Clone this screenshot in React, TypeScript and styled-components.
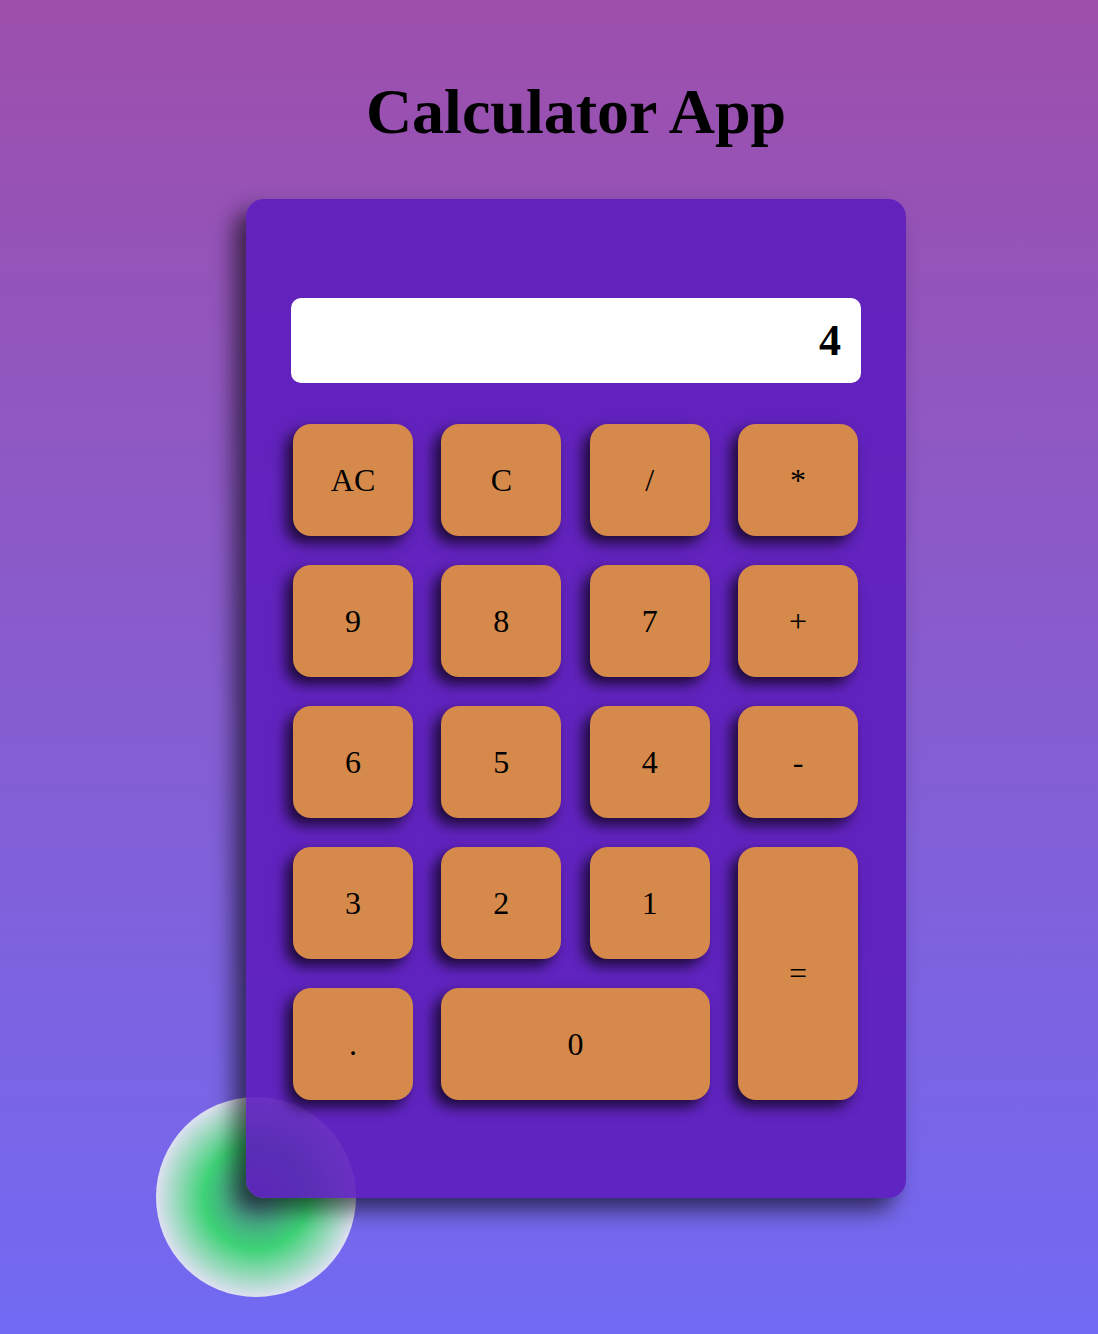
import React from "react";
import styled, { createGlobalStyle } from "styled-components";

const GlobalStyle = createGlobalStyle`
  html, body {
    margin: 0;
    padding: 0;
  }
  body {
    font-family: "Liberation Serif", "Times New Roman", serif;
  }
`;

const Page = styled.div`
  min-height: 100vh;
  box-sizing: border-box;
  padding: 75px 0 0 54px;
  background: linear-gradient(to bottom, #9d4fab 0%, #716af3 100%);
  display: flex;
  flex-direction: column;
  align-items: center;
`;

const Title = styled.h1`
  margin: 0;
  font-family: "Liberation Serif", "Times New Roman", serif;
  font-weight: 700;
  font-size: 64px;
  line-height: 74px;
  color: #000;
`;

const Stage = styled.div`
  position: relative;
  margin-top: 50px;
`;

const Orb = styled.div`
  position: absolute;
  left: -90px;
  top: 898px;
  width: 200px;
  height: 200px;
  border-radius: 50%;
  background: radial-gradient(
    circle closest-side,
    rgba(70, 140, 120, 0.75) 0%,
    #3dd276 52%,
    rgba(228, 230, 242, 0.95) 100%
  );
`;

const Calculator = styled.div`
  position: relative;
  z-index: 1;
  width: 660px;
  box-sizing: border-box;
  padding: 99px 45px 98px;
  border-radius: 18px;
  background: rgba(93, 29, 189, 0.9);
  box-shadow: -12px 12px 22px rgba(0, 0, 0, 0.6);
  display: flex;
  flex-direction: column;
  gap: 41px;
`;

const Display = styled.div`
  height: 85px;
  box-sizing: border-box;
  padding: 0 20px;
  border-radius: 10px;
  background: #ffffff;
  display: flex;
  align-items: center;
  justify-content: flex-end;
  font-family: "Liberation Serif", "Times New Roman", serif;
  font-weight: 700;
  font-size: 44px;
  color: #000;
`;

const Keys = styled.div`
  display: grid;
  grid-template-columns: repeat(4, 1fr);
  grid-auto-rows: 112px;
  column-gap: 28.33px;
  row-gap: 29px;
  padding: 0 3px 0 2px;
`;

const Key = styled.button<{ $wide?: boolean; $tall?: boolean }>`
  border: none;
  margin: 0;
  padding: 0;
  border-radius: 18px;
  background: #d5894a;
  color: #000;
  font-family: "Liberation Serif", "Times New Roman", serif;
  font-size: 32px;
  box-shadow: -7px 7px 14px rgba(0, 0, 0, 0.72);
  display: flex;
  align-items: center;
  justify-content: center;
  cursor: pointer;
  grid-column: ${(p) => (p.$wide ? "span 2" : "auto")};
  grid-row: ${(p) => (p.$tall ? "span 2" : "auto")};
`;

type KeyDef = { label: string; wide?: boolean; tall?: boolean };

const keys: KeyDef[] = [
  { label: "AC" },
  { label: "C" },
  { label: "/" },
  { label: "*" },
  { label: "9" },
  { label: "8" },
  { label: "7" },
  { label: "+" },
  { label: "6" },
  { label: "5" },
  { label: "4" },
  { label: "-" },
  { label: "3" },
  { label: "2" },
  { label: "1" },
  { label: "=", tall: true },
  { label: "." },
  { label: "0", wide: true },
];

export default function App() {
  return (
    <>
      <GlobalStyle />
      <Page>
        <Title>Calculator App</Title>
        <Stage>
          <Orb />
          <Calculator>
            <Display>4</Display>
            <Keys>
              {keys.map((k) => (
                <Key key={k.label} $wide={k.wide} $tall={k.tall}>
                  {k.label}
                </Key>
              ))}
            </Keys>
          </Calculator>
        </Stage>
      </Page>
    </>
  );
}
